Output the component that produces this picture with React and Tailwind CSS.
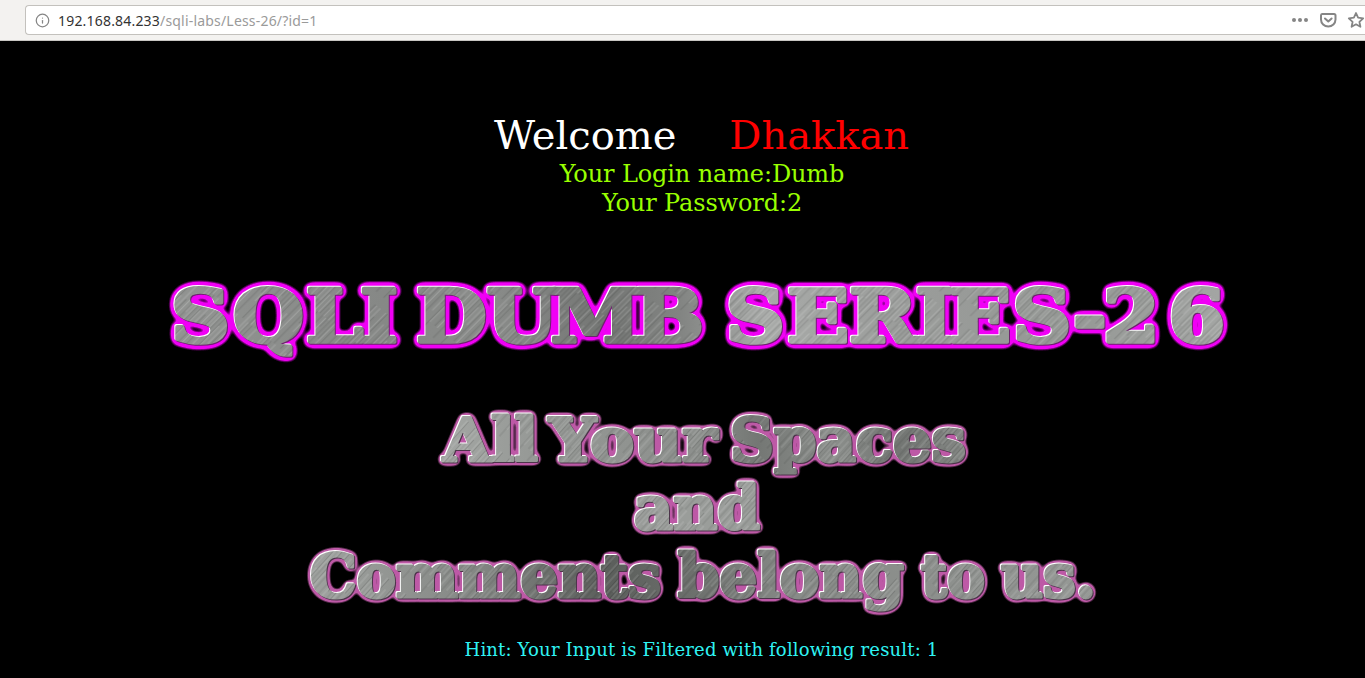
import { Info } from "lucide-react";

// The title glyphs are widened a little, so their positions are divided by the same factor.
const WIDEN = 1.11;

const TITLE = [
  { text: "SQLI", x: [171, 233, 306, 360] },
  { text: "DUMB", x: [416, 486.5, 550.5, 635] },
  { text: "SERIES-26", x: [726, 787, 849, 915.5, 949, 1012.5, 1073, 1103, 1168.5] },
];

const MOTTO = [
  { text: "All", x: 443, y: 461, w: 95 },
  { text: "Your", x: 549, y: 461, w: 168 },
  { text: "Spaces", x: 730, y: 461, w: 236 },
  { text: "and", x: 634, y: 529, w: 126 },
  { text: "Comments", x: 310, y: 597, w: 351 },
  { text: "belong", x: 678, y: 597, w: 226 },
  { text: "to", x: 921, y: 597, w: 64 },
  { text: "us.", x: 1001, y: 597, w: 95 },
];

const FILLS = { 461: "url(#metalFirst)", 529: "url(#metalMiddle)", 597: "url(#metalLast)" };

function Metal({ id, shade }) {
  return (
    <pattern id={id} width="1365" height="700" patternUnits="userSpaceOnUse">
      <rect width="1365" height="700" fill={shade} />
      <rect width="1365" height="700" fill="url(#brush)" />
    </pattern>
  );
}

function Relief({ id, blur, slope, intercept, glow, dark }) {
  return (
    <filter
      id={id}
      filterUnits="userSpaceOnUse"
      x="0"
      y="260"
      width="1365"
      height="370"
      colorInterpolationFilters="sRGB"
    >
      <feGaussianBlur in="SourceAlpha" stdDeviation={blur} result="soft" />
      <feComponentTransfer in="soft" result="spread">
        <feFuncA type="linear" slope={slope} intercept={intercept} />
      </feComponentTransfer>
      <feFlood floodColor={glow} />
      <feComposite in2="spread" operator="in" result="halo" />
      <feOffset in="SourceAlpha" dx="-0.6" dy="-0.6" result="up" />
      <feFlood floodColor="#fff" />
      <feComposite in2="up" operator="in" result="light" />
      <feOffset in="SourceAlpha" dx="0.6" dy="0.6" result="down" />
      <feFlood floodColor={dark} />
      <feComposite in2="down" operator="in" result="shade" />
      <feMerge>
        <feMergeNode in="halo" />
        <feMergeNode in="light" />
        <feMergeNode in="shade" />
        <feMergeNode in="SourceGraphic" />
      </feMerge>
    </filter>
  );
}

function Banner() {
  return (
    <svg
      className="block w-full h-[370px] font-bold font-['DejaVu_Serif',serif]"
      viewBox="0 260 1365 370"
    >
      <defs>
        <linearGradient id="shadeTop" gradientUnits="userSpaceOnUse" x1="154" y1="0" x2="1108" y2="0">
          <stop offset="0" stopColor="#929492" />
          <stop offset=".2" stopColor="#868886" />
          <stop offset=".3" stopColor="#8a8c8a" />
          <stop offset=".41" stopColor="#747674" />
          <stop offset=".48" stopColor="#828482" />
          <stop offset=".56" stopColor="#a8aaa8" />
          <stop offset=".7" stopColor="#9a9c9a" />
          <stop offset=".85" stopColor="#959895" />
          <stop offset="1" stopColor="#a4a6a4" />
        </linearGradient>
        <linearGradient id="shadeFirst" gradientUnits="userSpaceOnUse" x1="440" y1="0" x2="970" y2="0">
          <stop offset="0" stopColor="#a4a7a4" />
          <stop offset=".2" stopColor="#949794" />
          <stop offset=".48" stopColor="#8d908d" />
          <stop offset=".6" stopColor="#747774" />
          <stop offset=".74" stopColor="#8c8f8c" />
          <stop offset=".86" stopColor="#727572" />
          <stop offset="1" stopColor="#848784" />
        </linearGradient>
        <linearGradient id="shadeLast" gradientUnits="userSpaceOnUse" x1="310" y1="0" x2="1095" y2="0">
          <stop offset="0" stopColor="#9fa29f" />
          <stop offset=".2" stopColor="#868986" />
          <stop offset=".38" stopColor="#5b5e5b" />
          <stop offset=".48" stopColor="#6b6e6b" />
          <stop offset=".62" stopColor="#888b88" />
          <stop offset=".82" stopColor="#8d908d" />
          <stop offset="1" stopColor="#979a97" />
        </linearGradient>
        <pattern id="brush" width="23" height="170" patternUnits="userSpaceOnUse" patternTransform="rotate(42)">
          <g strokeWidth=".8">
            <path stroke="#fff" strokeOpacity=".24" d="M1 0v30M1 90v40M4 20v50M6 100v50M8 0v40M11 60v60M14 10v30M14 90v50M17 40v50M20 0v40M20 110v40" />
            <path stroke="#000" strokeOpacity=".16" d="M2.500 10v50M3 110v40M7 40v50M9.500 0v40M10 100v60M13 30v50M15.500 80v50M18.500 0v50M19 90v70M22 30v60" />
          </g>
        </pattern>
        <Metal id="metalTop" shade="url(#shadeTop)" />
        <Metal id="metalFirst" shade="url(#shadeFirst)" />
        <Metal id="metalMiddle" shade="#9a9d9a" />
        <Metal id="metalLast" shade="url(#shadeLast)" />
        <Relief id="reliefTop" blur="3.900" slope="10" intercept="-0.35" glow="#f000f5" dark="#702070" />
        <Relief id="reliefLow" blur="3" slope="8" intercept="-0.6" glow="#bd59a6" dark="#4c344a" />
      </defs>

      <g filter="url(#reliefTop)">
        <g
          transform="scale(1.11 1)"
          fontSize="73.500"
          fill="url(#metalTop)"
          stroke="url(#metalTop)"
          strokeWidth="3.600"
          strokeLinejoin="round"
        >
          {TITLE.map((w) => (
            <text key={w.text} x={w.x.map((x) => x / WIDEN).join(" ")} y="342.500">
              {w.text}
            </text>
          ))}
        </g>
      </g>

      <g filter="url(#reliefLow)" fontSize="60" strokeWidth="3" strokeLinejoin="round">
        {MOTTO.map((w) => (
          <text
            key={w.text}
            x={w.x}
            y={w.y}
            textLength={w.w}
            lengthAdjust="spacingAndGlyphs"
            fill={FILLS[w.y]}
            stroke={FILLS[w.y]}
          >
            {w.text}
          </text>
        ))}
      </g>
    </svg>
  );
}

function AddressBar() {
  return (
    <header className="flex h-[41px] items-start border-b border-[#c8c6c2] bg-[#f3f2f0] pl-[25px] pt-[5px]">
      <div className="flex h-[30px] flex-1 items-center rounded-l border border-r-0 border-[#c3c1bd] bg-white pl-[9px]">
        <Info className="size-[15px] shrink-0 text-[#858585]" strokeWidth={2} />
        <div className="ml-[8px] flex-1 whitespace-pre pt-[2px] text-[14px] leading-none tracking-[0.19px] text-[#9a9a9a] font-['Noto_Sans',sans-serif]">
          <span className="text-[#333]">192.168.84.233</span>/sqli-labs/Less-26/?id=1
        </div>
        <svg className="h-[20px] w-[74px] shrink-0" viewBox="0 0 74 20" fill="none" stroke="#858585">
          <g fill="#858585" stroke="none">
            <circle cx="3" cy="10" r="2" />
            <circle cx="9" cy="10" r="2" />
            <circle cx="15" cy="10" r="2" />
          </g>
          <path strokeWidth="2" strokeLinejoin="round" d="M31 4h12q1.500 0 1.500 1.500V9.500a7 6.700 0 0 1-14.500 0V5.500Q30 4 31 4Z" />
          <path strokeWidth="2" strokeLinecap="round" strokeLinejoin="round" d="m34 8.500 3.300 3 3.300-3" />
          <path strokeWidth="1.800" strokeLinejoin="round" d="m65 3 2.100 4.700 5.100.6-3.800 3.500 1 5-4.400-2.500-4.400 2.500 1-5-3.800-3.500 5.100-.6Z" />
        </svg>
      </div>
    </header>
  );
}

export default function App() {
  return (
    <div className="h-[678px] overflow-hidden bg-black">
      <AddressBar />
      <main className="flex flex-col font-['DejaVu_Serif',serif]">
        <div className="flex h-[219px] flex-col items-center pl-[38px] pt-[71px] text-center">
          <h1 className="flex h-[48px] gap-[53px] whitespace-nowrap text-[40px] leading-[47px] text-white">
            <span>Welcome</span>
            <span className="text-[#f00]">Dhakkan</span>
          </h1>
          <p className="pl-px text-[24px] leading-[29px] tracking-[-0.12px] text-[#99ff00]">
            Your Login name:Dumb
            <br />
            Your Password:2
          </p>
        </div>
        <Banner />
        <p className="pl-[38px] pt-[9px] text-center text-[18px] leading-[22px] tracking-[0.17px] text-[#2ff3f3]">
          Hint: Your Input is Filtered with following result: 1
        </p>
      </main>
    </div>
  );
}
